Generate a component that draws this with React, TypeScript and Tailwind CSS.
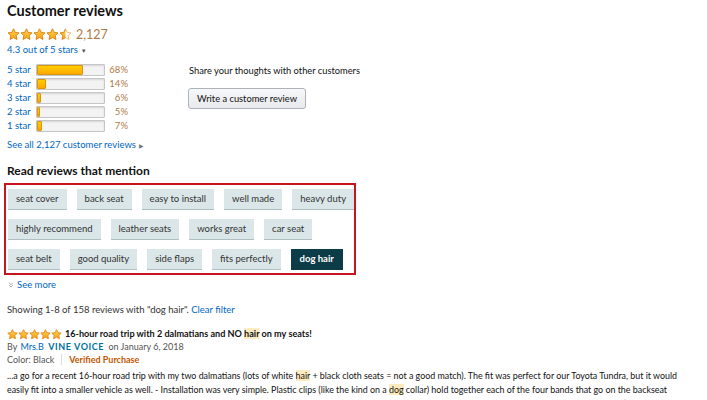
import { ChevronsDown } from "lucide-react";

const STAR_PATH =
  "M12 1.6l3.05 6.5 7.1.95-5.2 4.95 1.35 7.05L12 17.6l-6.3 3.45 1.35-7.05-5.2-4.95 7.1-.95z";

function Star({ size, fill, id }: { size: number; fill: number; id: string }) {
  return (
    <svg width={size} height={size} viewBox="0 0 24 24" className="block">
      <defs>
        <linearGradient id={`g-${id}`} x1="0" y1="0" x2="0" y2="1">
          <stop offset="0" stopColor="#ffd24a" />
          <stop offset="1" stopColor="#f7a31c" />
        </linearGradient>
        <clipPath id={`c-${id}`}>
          <rect x="0" y="0" width={24 * fill} height="24" />
        </clipPath>
      </defs>
      <path d={STAR_PATH} fill="#fff" stroke="#e3a94c" strokeWidth="1.4" strokeLinejoin="round" />
      <path
        d={STAR_PATH}
        fill={`url(#g-${id})`}
        stroke="#dc7d12"
        strokeWidth="1.4"
        strokeLinejoin="round"
        clipPath={`url(#c-${id})`}
      />
    </svg>
  );
}

function Stars({ rating, size, prefix }: { rating: number; size: number; prefix: string }) {
  return (
    <div className="flex">
      {[0, 1, 2, 3, 4].map((i) => (
        <Star
          key={i}
          size={size}
          id={`${prefix}${i}`}
          fill={Math.max(0, Math.min(1, rating - i))}
        />
      ))}
    </div>
  );
}

const histogram = [
  { label: "5 star", pct: 68 },
  { label: "4 star", pct: 14 },
  { label: "3 star", pct: 6 },
  { label: "2 star", pct: 5 },
  { label: "1 star", pct: 7 },
];

const chipRows = [
  ["seat cover", "back seat", "easy to install", "well made", "heavy duty"],
  ["highly recommend", "leather seats", "works great", "car seat"],
  ["seat belt", "good quality", "side flaps", "fits perfectly", "dog hair"],
];

function Hl({ children }: { children: string }) {
  return <span className="bg-[#fdebc0]">{children}</span>;
}

export default function App() {
  return (
    <div className="h-[400px] w-[707px] overflow-hidden bg-white font-['Lato',sans-serif] text-[#111]">
      <div className="px-[7px]">
        <h2 className="pt-[1px] text-[14.5px] font-bold leading-[20px]">Customer reviews</h2>

        <div className="mt-[5px] flex h-[17px] items-center gap-[4px]">
          <Stars rating={4.5} size={13} prefix="top" />
          <span className="text-[12.5px] leading-[17px] text-[#b07a47]">2,127</span>
        </div>

        <div className="flex h-[14px] items-center gap-[3px] text-[9.5px] text-[#0066c0]">
          4.3 out of 5 stars
          <span className="text-[6px] text-[#555]">▼</span>
        </div>

        <div className="mt-[6px] flex">
          <div className="w-[182px]">
            {histogram.map((row) => (
              <div key={row.label} className="flex h-[14px] items-center text-[9.5px]">
                <span className="w-[29px] text-[#0066c0]">{row.label}</span>
                <div className="h-[12px] w-[69px] rounded-[1px] border border-[#c6c6c6] bg-[#f3f3f3] shadow-[inset_0_1px_2px_rgba(0,0,0,0.12)]">
                  <div
                    className="h-full rounded-[1px] border border-[#d9960c] bg-gradient-to-b from-[#ffce00] to-[#ffa700]"
                    style={{ width: `${row.pct}%` }}
                  />
                </div>
                <span className="w-[23px] text-right text-[#b07a47]">{row.pct}%</span>
              </div>
            ))}
            <div className="mt-[5px] flex h-[14px] items-center gap-[3px] text-[9.5px] text-[#0066c0]">
              See all 2,127 customer reviews
              <span className="text-[6px] text-[#777]">▶</span>
            </div>
          </div>

          <div className="pt-[1px]">
            <p className="h-[14px] text-[9.3px] leading-[14px]">Share your thoughts with other customers</p>
            <button className="ml-[-1px] mt-[10px] h-[21px] rounded-[3px] border border-[#adb1b8] bg-gradient-to-b from-[#f7f8fa] to-[#e7e9ec] px-[8px] text-[9.3px] text-[#111]">
              Write a customer review
            </button>
          </div>
        </div>

        <h3 className="mt-[11px] h-[16px] text-[12px] font-bold leading-[16px]">
          Read reviews that mention
        </h3>
      </div>

      <div className="ml-[4px] mt-[4px] flex w-[352px] flex-col gap-[9px] border-2 border-[#c8141e] px-[2px] pb-[3px] pt-[4px]">
        {chipRows.map((row, i) => (
          <div key={i} className="flex gap-[10px]">
            {row.map((chip) => {
              const active = chip === "dog hair";
              return (
                <span
                  key={chip}
                  className={
                    active
                      ? "flex h-[21px] shrink-0 items-center whitespace-nowrap bg-[#0b3c48] px-[9px] text-[9.5px] font-bold text-white"
                      : "flex h-[21px] shrink-0 items-center whitespace-nowrap border-b border-[#aebfc3] bg-[#dae6e8] px-[8px] text-[9.5px] text-[#333]"
                  }
                >
                  {chip}
                </span>
              );
            })}
          </div>
        ))}
      </div>

      <div className="px-[7px]">
        <div className="mt-[3px] flex h-[14px] items-center gap-[2px] text-[9.5px] text-[#0066c0]">
          <ChevronsDown size={8} className="text-[#999]" strokeWidth={2.5} />
          See more
        </div>

        <p className="mt-[11px] h-[14px] text-[9.5px] leading-[14px] text-[#333]">
          Showing 1-8 of 158 reviews with "dog hair".{" "}
          <span className="text-[#0066c0]">Clear filter</span>
        </p>

        <div className="mt-[10px] flex h-[14px] items-center gap-[3px]">
          <Stars rating={5} size={11} prefix="rv" />
          <span className="whitespace-nowrap text-[9.1px] font-bold">
            16-hour road trip with 2 dalmatians and NO <Hl>hair</Hl> on my seats!
          </span>
        </div>

        <p className="h-[12px] whitespace-nowrap text-[9px] leading-[12px] text-[#555]">
          By <span className="ml-[1px] text-[#0066c0]">Mrs.B</span>{" "}
          <span className="mx-[2px] font-bold tracking-[0.6px] text-[#00729c]">VINE VOICE</span> on January
          6, 2018
        </p>

        <div className="flex h-[13px] items-center text-[9px] text-[#555]">
          <span>Color: Black</span>
          <span className="mx-[7px] h-[11px] w-px bg-[#ddd]" />
          <span className="font-bold text-[#c45500]">Verified Purchase</span>
        </div>

        <div className="mt-[3px] whitespace-nowrap text-[8.9px] leading-[14px] text-[#111]">
          <div>
            ...a go for a recent 16-hour road trip with my two dalmatians (lots of white <Hl>hair</Hl> +
            black cloth seats = not a good match). The fit was perfect for our Toyota Tundra, but it would
          </div>
          <div>
            easily fit into a smaller vehicle as well. - Installation was very simple. Plastic clips (like
            the kind on a <Hl>dog</Hl> collar) hold together each of the four bands that go on the backseat
          </div>
          <div>
            headrests and the front seat headrests. The sides can be zippered up or down for extra
            protection. I opted to leave one side zipped the entire time and opened (closed one side
          </div>
        </div>
      </div>
    </div>
  );
}
